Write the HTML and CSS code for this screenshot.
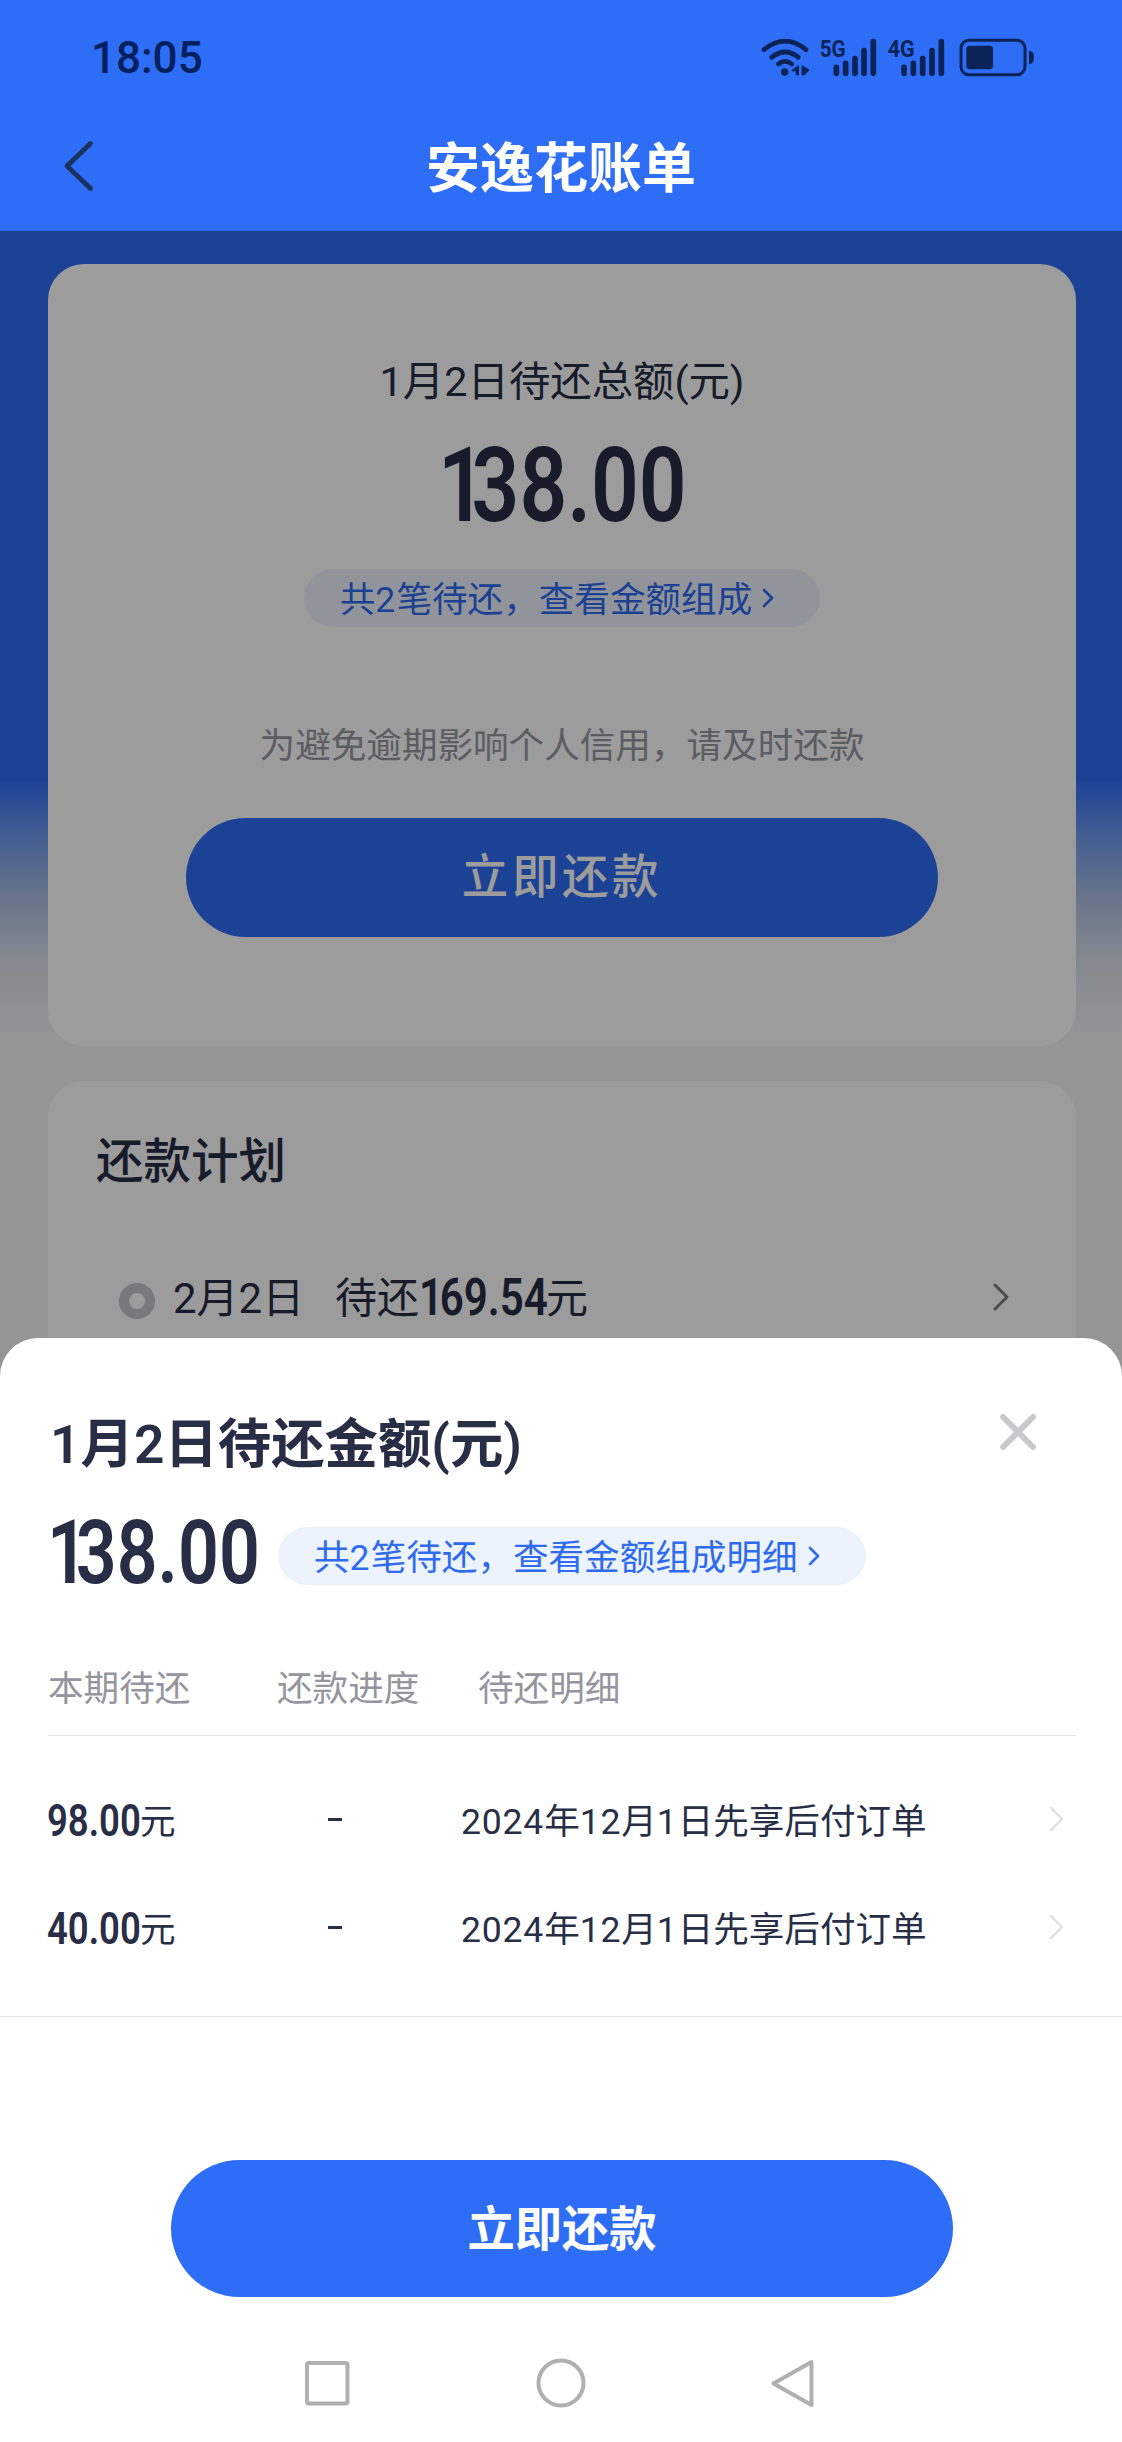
FILE: index.html
```html
<!DOCTYPE html>
<html lang="zh-CN">
<head>
<meta charset="utf-8">
<title>安逸花账单</title>
<link rel="stylesheet" href="styles.css">
</head>
<body>
<div class="screen">
  <header class="header">
    <div class="status">
      <span class="time">18:05</span>
      <svg class="status-icons" viewBox="0 0 960 240" aria-hidden="true">
        <g fill="none" stroke="#0c2358" stroke-width="14" stroke-linecap="round">
          <path d="M72 89Q135 38 198 89"/>
          <path d="M95 112Q135 80 175 112"/>
          <path d="M115 132Q135 116 155 132"/>
          <g stroke-width="17">
            <path d="M289 142V160"/><path d="M317 130V160"/><path d="M345 116V160"/><path d="M372 92V160"/><path d="M400 65V160"/>
            <path d="M492 142V160"/><path d="M520 130V160"/><path d="M548 116V160"/><path d="M576 92V160"/><path d="M604 65V160"/>
          </g>
          <rect x="663" y="61" width="192" height="103" rx="24" stroke-width="9"/>
        </g>
        <g fill="#0c2358">
          <circle cx="134" cy="156" r="11"/>
          <path stroke="#0c2358" stroke-width="4" d="M175 138V164H169V152H156ZM187 138L206 150L192 164H187Z"/>
          <rect x="679" y="77" width="80" height="71" rx="10"/>
          <path d="M867 93H872Q882 96 882 112Q882 128 872 132H867Z"/>
          <text class="net" x="239" y="110" textLength="78" lengthAdjust="spacingAndGlyphs">5G</text>
          <text class="net" x="443" y="110" textLength="81" lengthAdjust="spacingAndGlyphs">4G</text>
        </g>
      </svg>
    </div>
    <div class="navbar">
      <svg class="back" viewBox="0 0 32 54" aria-hidden="true"><path d="M28.500 4.500L5 27L28.500 49.500"/></svg>
      <h1 class="title">安逸花账单</h1>
    </div>
  </header>

  <main class="page">
    <section class="card summary">
      <p class="summary-label">1月2日待还总额(元)</p>
      <p class="amount amount-xl"><span><i class="one">1</i>38.00</span></p>
      <a class="pill"><span>共<i>2</i>笔待还，查看金额组成</span><svg class="pill-arrow" viewBox="0 0 14 22"><path d="M3 3L11 11L3 19"/></svg></a>
      <p class="hint">为避免逾期影响个人信用，请及时还款</p>
      <button class="btn btn-page">立即还款</button>
    </section>
    <section class="card plan">
      <h2 class="plan-title">还款计划</h2>
      <div class="plan-row">
        <span class="dot"></span>
        <span class="txt plan-date">2月2日</span>
        <span class="txt">待还</span><span class="amount amount-md"><span><i class="one">1</i>69.54</span></span><span class="txt">元</span>
        <svg class="plan-arrow" viewBox="0 0 18 30"><path d="M3 3L15 15L3 27"/></svg>
      </div>
    </section>
  </main>

  <div class="mask"></div>

  <section class="sheet">
    <div class="sheet-head">
      <h2 class="sheet-title">1月2日待还金额(元)</h2>
      <svg class="close" viewBox="0 0 40 40"><path d="M5 5L35 35M35 5L5 35"/></svg>
    </div>
    <div class="sheet-total">
      <span class="amount amount-lg"><span><i class="one">1</i>38.00</span></span>
      <a class="pill"><span>共<i>2</i>笔待还，查看金额组成明细</span><svg class="pill-arrow" viewBox="0 0 14 22"><path d="M3 3L11 11L3 19"/></svg></a>
    </div>
    <div class="grid grid-head">
      <span>本期待还</span><span>还款进度</span><span>待还明细</span>
    </div>
    <div class="rows">
      <div class="grid row">
        <span class="sum"><span class="amount amount-sm"><span>98.00</span></span><span class="txt">元</span></span>
        <span class="dash"></span>
        <span class="txt detail"><i>2024</i>年<i>12</i>月<i>1</i>日先享后付订单</span>
        <svg class="row-arrow" viewBox="0 0 16 28"><path d="M2 3L13 14L2 25"/></svg>
      </div>
      <div class="grid row">
        <span class="sum"><span class="amount amount-sm"><span>40.00</span></span><span class="txt">元</span></span>
        <span class="dash"></span>
        <span class="txt detail"><i>2024</i>年<i>12</i>月<i>1</i>日先享后付订单</span>
        <svg class="row-arrow" viewBox="0 0 16 28"><path d="M2 3L13 14L2 25"/></svg>
      </div>
    </div>
    <div class="sheet-foot">
      <button class="btn btn-sheet">立即还款</button>
    </div>
    <nav class="sysnav">
      <svg viewBox="0 0 54 54"><rect x="7" y="7" width="40.500" height="40.500" rx="2"/></svg>
      <svg viewBox="0 0 54 54"><circle cx="27" cy="27" r="22.500"/></svg>
      <svg viewBox="0 0 54 54"><path d="M44.500 6V49L6.500 27.500Z"/></svg>
    </nav>
  </section>
</div>
</body>
</html>
```

FILE: styles.css
```css
* { box-sizing: border-box; }
body, h1, h2, p { margin: 0; }
i { font-style: normal; }
svg { display: block; fill: none; stroke-linecap: round; stroke-linejoin: round; }

body {
  font-family: Roboto, "Noto Sans CJK SC", sans-serif;
  font-size: 35.6px;
  color: #282e45;
}

.screen {
  position: relative;
  width: 1122px;
  height: 2442px;
  overflow: hidden;
  background: #f3f3f3;
}

/* status bar and title */
.header { height: 231px; background: #2e6df6; }
.status {
  display: flex;
  justify-content: space-between;
  height: 100px;
  padding: 20px 62px 0 91px;
}
.time {
  font-size: 44px;
  line-height: 76px;
  font-weight: 500;
  color: #04205e;
}
.status-icons { width: 320px; height: 80px; }
.net { font-family: Roboto, sans-serif; font-weight: 700; font-size: 74px; }
.navbar {
  display: grid;
  grid-template-columns: 1fr auto 1fr;
  align-items: center;
  height: 132px;
  padding-left: 62px;
}
.back { width: 32px; height: 54px; stroke: #1b315f; stroke-width: 4.800; }
.title {
  margin-right: 62px;
  padding-top: 7px;
  font-size: 54px;
  font-weight: 700;
  line-height: 80px;
  color: #fff;
}

/* page behind the sheet */
.page {
  display: flex;
  flex-direction: column;
  gap: 35px;
  height: 1200px;
  padding: 33px 46px 0 48px;
  background: linear-gradient(#2e6df6 549px, #759fec 612px, #aec1e2 669px, #d8e0ea 729px, #f3f3f3 809px);
}
.card { border-radius: 36px; background: #fff; }
.summary {
  display: flex;
  flex-direction: column;
  align-items: center;
  height: 782px;
  padding-top: 88px;
}
.summary-label { font-size: 41.400px; line-height: 60px; }
.pill {
  display: flex;
  align-items: center;
  height: 58px;
  padding: 0 45px 0 36px;
  border-radius: 29px;
  background: #edf3fd;
  color: #2e6bf0;
  white-space: nowrap;
}
.pill span { padding-bottom: 4px; }
.pill i { letter-spacing: .03em; }
.pill-arrow { width: 14px; height: 22px; margin-left: 9px; stroke: currentColor; stroke-width: 2.600; }
.hint { margin-top: 93px; line-height: 52px; color: #96989f; }
.btn {
  display: block;
  padding: 0;
  border: 0;
  background: #2e6df6;
  color: #fff;
  font-family: inherit;
  font-weight: 500;
}
.btn-page {
  width: 752px;
  height: 119px;
  margin-top: 46px;
  padding-bottom: 11px;
  border-radius: 60px;
  font-size: 46.500px;
  letter-spacing: 3.600px;
}
.plan { flex: 1; padding: 48px 48px 0; }
.plan-title { font-size: 47.500px; font-weight: 500; line-height: 66px; }
.plan-row {
  display: flex;
  align-items: center;
  margin-top: 72px;
  padding-left: 23px;
  height: 60px;
  font-size: 42px;
}
.txt { padding-bottom: 5px; }
.dot {
  width: 36px;
  height: 36px;
  margin: 8px 18px 0 0;
  border: 10px solid #c6c6cb;
  border-radius: 50%;
}
.plan-date { width: 162px; white-space: nowrap; }
.plan-arrow { width: 18px; height: 30px; margin-left: auto; margin-right: 18px; stroke: #7d7d82; stroke-width: 3; }

/* condensed figures */
.amount { display: inline-block; font-weight: 600; white-space: nowrap; }
.amount > span { display: inline-block; transform: scaleX(.805); transform-origin: 0 50%; }
.one { letter-spacing: -.170em; }
.amount-xl { width: 248px; margin: 29px 0 38px; font-size: 104px; line-height: 90px; }
.amount-lg { width: 231px; font-size: 89px; line-height: 90px; }
.amount-md { width: 127px; padding-top: 2px; font-size: 52px; line-height: 60px; }
.amount-md .one { letter-spacing: -.080em; }
.amount-sm { width: 93px; padding-top: 3px; font-size: 44px; line-height: 50px; }
.amount-sm > span { transform: scaleX(.830); }
.amount-md > span { transform: scaleX(.810); }

.mask { position: absolute; inset: 231px 0 0; background: rgba(0, 0, 0, .39); }

/* bottom sheet */
.sheet {
  position: absolute;
  inset: 1338px 0 0;
  border-radius: 38px 38px 0 0;
  background: #fff;
}
.sheet-head {
  display: flex;
  justify-content: space-between;
  padding: 66px 84px 0 50px;
}
.sheet-title { padding-top: 1px; font-size: 53.400px; font-weight: 600; line-height: 80px; }
.close { width: 40px; height: 40px; margin-top: 8px; stroke: #c8c9cd; stroke-width: 6; }
.sheet-total {
  display: flex;
  align-items: center;
  height: 90px;
  margin-top: 23px;
  padding-left: 47px;
}
.sheet-total .pill { margin-top: 6px; }
.grid {
  display: grid;
  grid-template-columns: 229px 201px 1fr;
  align-items: center;
}
.grid-head {
  height: 94px;
  margin: 44px 46px 0 48px;
  padding-bottom: 6px;
  border-bottom: 1px solid #e4e4e6;
  color: #94959d;
}
.rows {
  height: 281px;
  padding: 29px 0 0 47px;
  border-bottom: 1px solid #e4e4e6;
}
.row { height: 108px; grid-template-columns: 281px 133px 1fr auto; padding-right: 57px; }
.row .txt { padding-bottom: 2px; }
.row i { letter-spacing: .022em; }
.sum { display: flex; align-items: center; }
.dash { width: 14px; height: 3px; background: currentColor; }
.row-arrow { width: 16px; height: 28px; stroke: #dedee1; stroke-width: 2.400; }
.sheet-foot { padding: 143px 169px 0 171px; }
.btn-sheet {
  width: 782px;
  height: 137px;
  padding-bottom: 6px;
  border-radius: 69px;
  font-size: 47.300px;
  font-weight: 600;
}
.sysnav { display: flex; gap: 179.500px; margin-top: 59px; padding-left: 300px; }
.sysnav svg { width: 54px; height: 54px; stroke: #b0b0b0; stroke-width: 4; }
```
